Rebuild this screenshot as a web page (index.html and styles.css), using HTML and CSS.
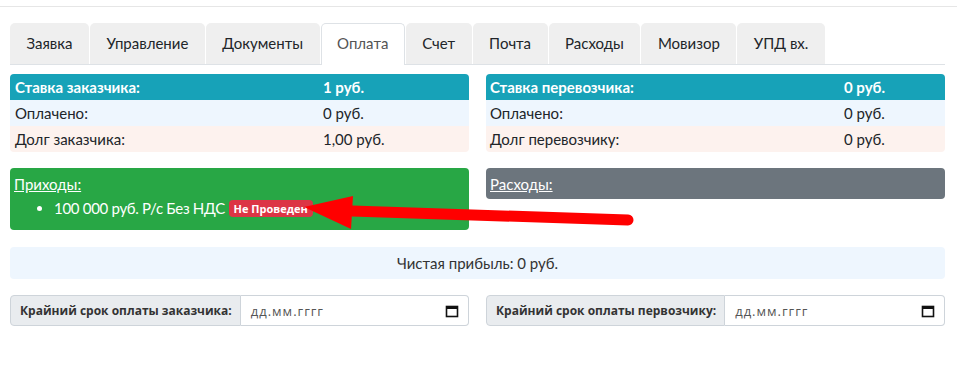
FILE: index.html
```html
<!DOCTYPE html>
<html lang="ru">
<head>
    <meta charset="UTF-8">
    <title>Оплата</title>
    <link rel="stylesheet" href="styles.css">
</head>
<body>
    <div class="topline"></div>
    <div class="page">
        <div class="tabs">
            <div class="tab">Заявка</div>
            <div class="tab">Управление</div>
            <div class="tab">Документы</div>
            <div class="tab active">Оплата</div>
            <div class="tab">Счет</div>
            <div class="tab">Почта</div>
            <div class="tab">Расходы</div>
            <div class="tab">Мовизор</div>
            <div class="tab">УПД вх.</div>
        </div>

        <div class="cols">
            <div class="summary">
                <div class="row head"><span>Ставка заказчика:</span><span>1 руб.</span></div>
                <div class="row paid"><span>Оплачено:</span><span>0 руб.</span></div>
                <div class="row debt"><span>Долг заказчика:</span><span>1,00 руб.</span></div>
            </div>
            <div class="summary">
                <div class="row head"><span>Ставка перевозчика:</span><span>0 руб.</span></div>
                <div class="row paid"><span>Оплачено:</span><span>0 руб.</span></div>
                <div class="row debt"><span>Долг перевозчику:</span><span>0 руб.</span></div>
            </div>
        </div>

        <div class="cols top">
            <div class="card income">
                <a class="card-title">Приходы:</a>
                <ul>
                    <li>100 000 руб. Р/с Без НДС <span class="badge">Не Проведен</span></li>
                </ul>
            </div>
            <div class="card expense">
                <a class="card-title">Расходы:</a>
            </div>
        </div>

        <div class="profit">Чистая прибыль: 0 руб.</div>

        <div class="cols">
            <div class="input-group">
                <label class="ig-label">Крайний срок оплаты заказчика:</label>
                <div class="date-field">
                    <span>дд.мм.гггг</span>
                    <svg width="14" height="14" viewBox="0 0 14 14"><rect x="1.5" y="2.5" width="11" height="10" fill="none" stroke="#111" stroke-width="1.6"/><rect x="1" y="2" width="12" height="3" fill="#111"/></svg>
                </div>
            </div>
            <div class="input-group">
                <label class="ig-label">Крайний срок оплаты первозчику:</label>
                <div class="date-field">
                    <span>дд.мм.гггг</span>
                    <svg width="14" height="14" viewBox="0 0 14 14"><rect x="1.5" y="2.5" width="11" height="10" fill="none" stroke="#111" stroke-width="1.6"/><rect x="1" y="2" width="12" height="3" fill="#111"/></svg>
                </div>
            </div>
        </div>
    </div>

    <svg class="arrow" width="957" height="367" viewBox="0 0 957 367">
        <line x1="352" y1="211" x2="628" y2="220" stroke="#ff0000" stroke-width="11" stroke-linecap="round"/>
        <polygon points="304,207 353,196 351,229" fill="#ff0000"/>
    </svg>
</body>
</html>
```

FILE: styles.css
```css
body {
    margin: 0;
    font-family: Lato, "Open Sans", sans-serif;
    font-size: 15px;
    color: #212529;
    background: #fff;
    position: relative;
}
.topline {
    margin-top: 6px;
    border-top: 1px solid #e6e6e6;
}
.page {
    width: 935px;
    margin-left: 10px;
}
.tabs {
    display: flex;
    margin-top: 16px;
    border-bottom: 1px solid #dee2e6;
}
.tab {
    height: 40px;
    line-height: 39px;
    padding: 0 15.5px;
    margin-right: 1px;
    background: #efefef;
    border-radius: 5px 5px 0 0;
    margin-bottom: -1px;
    border: 1px solid transparent;
    border-bottom: none;
    box-sizing: content-box;
}
.tab.active {
    background: #fff;
    color: #555;
    border-color: #dee2e6;
    height: 41px;
}
.cols {
    display: grid;
    grid-template-columns: 459px 459px;
    column-gap: 17px;
    margin-top: 9px;
}
.cols.top {
    margin-top: 16px;
    align-items: start;
}
.summary {
    border-radius: 4px;
    overflow: hidden;
}
.row {
    display: grid;
    grid-template-columns: 308px 1fr;
    height: 26px;
    line-height: 26px;
    padding-left: 5px;
}
.summary:last-child .row {
    grid-template-columns: 354px 1fr;
    padding-left: 4px;
}
.row.head {
    background: #17a2b8;
    color: #fff;
    font-weight: bold;
}
.row.paid {
    background: #eef6fe;
}
.row.debt {
    background: #fdf2ee;
}
.card {
    border-radius: 4px;
    color: #fff;
    padding: 7px 4px 11px;
}
.card.income {
    background: #28a745;
}
.card.expense {
    background: #6c757d;
    padding-bottom: 6px;
    height: 18px;
}
.card-title {
    text-decoration: underline;
    line-height: 19px;
    display: block;
}
.card ul {
    margin: 4px 0 0;
    padding-left: 40px;
    line-height: 21px;
    letter-spacing: -0.3px;
}
.badge {
    display: inline-block;
    background: #dc3545;
    color: #fff;
    font-family: "Open Sans", sans-serif;
    font-weight: bold;
    font-size: 11px;
    letter-spacing: 0;
    line-height: 17px;
    padding: 0 5px;
    border-radius: 4px;
    vertical-align: 1px;
}
.profit {
    margin-top: 17px;
    height: 32px;
    line-height: 32px;
    text-align: center;
    background: #eef6fe;
    border-radius: 4px;
    color: #333;
}
.input-group {
    display: flex;
    height: 31px;
    margin-top: 7px;
}
.ig-label {
    display: flex;
    align-items: center;
    padding: 0 8px 0 9px;
    background: #e9ecef;
    border: 1px solid #ced4da;
    border-radius: 4px 0 0 4px;
    font-family: "Open Sans", sans-serif;
    font-weight: bold;
    font-size: 12px;
    color: #333;
    white-space: nowrap;
}
.date-field {
    flex: 1;
    display: flex;
    align-items: center;
    justify-content: space-between;
    padding: 0 9px 0 10px;
    border: 1px solid #ced4da;
    border-left: none;
    border-radius: 0 4px 4px 0;
    font-family: "Open Sans", sans-serif;
    font-size: 13px;
    letter-spacing: 1px;
    color: #555;
}
.arrow {
    position: absolute;
    left: 0;
    top: 0;
    pointer-events: none;
}
```
